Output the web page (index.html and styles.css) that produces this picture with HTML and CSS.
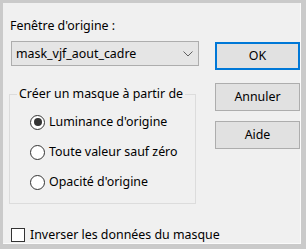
FILE: index.html
```html
<!DOCTYPE html>
<html lang="fr">
<head>
<meta charset="utf-8">
<link rel="stylesheet" href="styles.css">
</head>
<body>
<div class="dialog">
  <div class="main">
    <div class="left">
      <div class="label">Fenêtre d'origine :</div>
      <div class="combo">
        <span class="combo-text">mask_vjf_aout_cadre</span>
        <svg class="chevron" width="10" height="6" viewBox="0 0 10 6"><polyline points="0.5,0.5 5,5 9.5,0.5" fill="none" stroke="#606060" stroke-width="1"/></svg>
      </div>
      <fieldset class="group">
        <legend>Créer un masque à partir de</legend>
        <label class="radio"><span class="circle checked"></span>Luminance d'origine</label>
        <label class="radio"><span class="circle"></span>Toute valeur sauf zéro</label>
        <label class="radio"><span class="circle"></span>Opacité d'origine</label>
      </fieldset>
    </div>
    <div class="buttons">
      <div class="btn ok">OK</div>
      <div class="btn cancel">Annuler</div>
      <div class="btn help">Aide</div>
    </div>
  </div>
  <label class="check"><span class="box"></span>Inverser les données du masque</label>
</div>
</body>
</html>
```
FILE: styles.css
```css
html, body {
  margin: 0;
  padding: 0;
}
body {
  background: #cacaca;
  font-family: "Noto Sans", "DejaVu Sans", sans-serif;
  font-size: 12.4px;
  line-height: 16px;
  color: #000;
}
.dialog {
  margin: 3px 5px 5px 3px;
  width: 298px;
  height: 241px;
  box-sizing: border-box;
  background: #f0f0f0;
  border-right: 1px solid #fafafa;
  border-bottom: 1px solid #fafafa;
  padding-top: 15px;
}
.main {
  display: grid;
  grid-template-columns: 190px 85px;
  column-gap: 16px;
  padding-left: 6px;
}
.left {
  display: flex;
  flex-direction: column;
}
.label {
  margin-left: 1px;
}
.combo {
  margin-top: 7px;
  margin-left: 2px;
  width: 188px;
  height: 25px;
  box-sizing: border-box;
  border: 1px solid #adadad;
  background: #e5e5e5;
  display: flex;
  align-items: center;
  justify-content: space-between;
  padding: 0 5px 0 4px;
}
.chevron {
  display: block;
}
.group {
  margin: 20px 0 0 0;
  width: 187px;
  min-width: 0;
  box-sizing: border-box;
  border: 1px solid #dcdcdc;
  padding: 12px 0 13px 7px;
  display: flex;
  flex-direction: column;
  gap: 14px;
}
.group legend {
  padding: 0 2px;
  margin: 0;
  white-space: nowrap;
}
.radio {
  display: flex;
  align-items: center;
  height: 16px;
  gap: 4px;
  margin-left: 13px;
}
.circle {
  width: 15px;
  height: 15px;
  box-sizing: border-box;
  border: 1px solid #333;
  border-radius: 50%;
  background: #fff;
  display: flex;
  align-items: center;
  justify-content: center;
}
.circle.checked::after {
  content: "";
  width: 8px;
  height: 8px;
  border-radius: 50%;
  background: #333;
}
.buttons {
  display: flex;
  flex-direction: column;
  padding-top: 24px;
}
.btn {
  height: 28px;
  box-sizing: border-box;
  border: 1px solid #adadad;
  background: #e1e1e1;
  display: flex;
  align-items: center;
  justify-content: center;
}
.btn.ok {
  border: 2px solid #0078d7;
}
.btn.cancel {
  margin-top: 13px;
}
.btn.help {
  margin-top: 10px;
}
.check {
  margin: 23px 0 0 8px;
  display: flex;
  align-items: center;
  gap: 5px;
}
.box {
  width: 14px;
  height: 14px;
  box-sizing: border-box;
  border: 1px solid #333;
  background: #fff;
}
```
